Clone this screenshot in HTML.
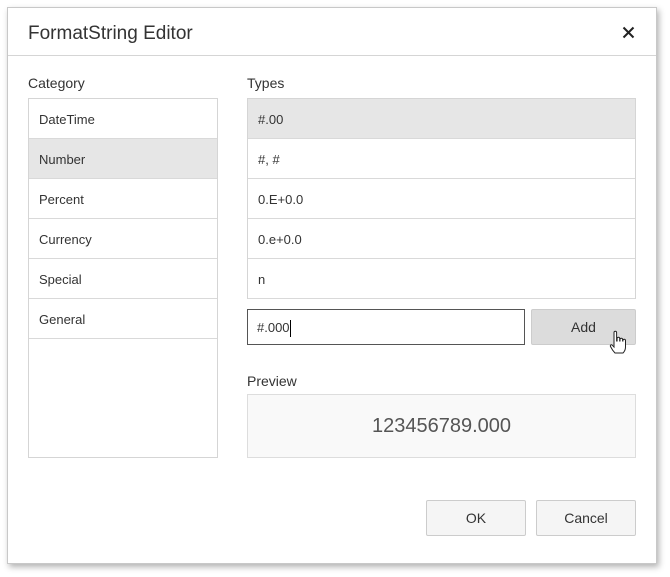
<!DOCTYPE html>
<html><head><style>
body{margin:0;width:670px;height:577px;background:#fff;font-family:"Liberation Sans",sans-serif;position:relative;overflow:hidden}
.dlg{position:absolute;left:7px;top:7px;width:648px;height:555px;border:1px solid #c8c8c8;background:#fff;box-shadow:2px 3px 6px rgba(0,0,0,.3)}
.a{position:absolute}
.title{left:20px;top:15px;font-size:19px;color:#333}
.hdr{left:0;top:47px;width:648px;height:1px;background:#d5d5d5}
.lbl{font-size:14px;color:#333}
.list{border:1px solid #d5d5d5;box-sizing:border-box;background:#fff}
.it{height:40px;border-bottom:1px solid #d9d9d9;box-sizing:border-box;font-size:13px;color:#333;padding-left:10px;line-height:41px}
.sel{background:#e6e6e6}
.btn{border:1px solid #ccc;border-radius:2px;background:#f5f5f5;box-sizing:border-box;text-align:center;font-size:14px;color:#333}
</style></head><body>
<div class="dlg">
<div class="a title">FormatString Editor</div>
<svg class="a" style="left:614px;top:18px" width="13" height="13"><path d="M1.5 1.5L11.5 11.5M11.5 1.5L1.5 11.5" stroke="#222" stroke-width="2"/></svg>
<div class="a hdr"></div>
<div class="a lbl" style="left:20px;top:67px">Category</div>
<div class="a lbl" style="left:239px;top:67px">Types</div>
<div class="a list" style="left:20px;top:90px;width:190px;height:360px">
<div class="it">DateTime</div><div class="it sel">Number</div><div class="it">Percent</div><div class="it">Currency</div><div class="it">Special</div><div class="it">General</div></div>
<div class="a list" style="left:239px;top:90px;width:389px;height:201px;border-bottom:none">
<div class="it sel">#.00</div><div class="it">#, #</div><div class="it">0.E+0.0</div><div class="it">0.e+0.0</div><div class="it">n</div></div>
<div class="a" style="left:239px;top:301px;width:278px;height:36px;border:1px solid #555;box-sizing:border-box;font-size:13px;color:#333;padding-left:9px;line-height:35px">#.000<span style="display:inline-block;width:1px;height:17px;background:#000;vertical-align:middle"></span></div>
<div class="a btn" style="left:523px;top:301px;width:105px;height:36px;line-height:35px;background:#dcdcdc">Add</div>
<svg class="a" style="left:601px;top:322px" width="18" height="26" viewBox="0 0 18 26"><path d="M5 2.5a1.3 1.3 0 0 1 2.6 0V11h.5V8.5a1.3 1.3 0 0 1 2.6 0V11h.3V9.5a1.3 1.3 0 0 1 2.6 0V11h.3v-.5a1.3 1.3 0 0 1 2.6 0V17c0 3-1.5 5-2.5 6H6c-1-1-3.5-4.5-4.5-6.5-.6-1.2.7-2.3 1.7-1.3L5 17z" fill="#fff" stroke="#222" stroke-width="1"/></svg>
<div class="a lbl" style="left:239px;top:365px">Preview</div>
<div class="a" style="left:239px;top:386px;width:389px;height:64px;border:1px solid #ddd;box-sizing:border-box;background:#f9f9f9;text-align:center;line-height:62px;font-size:20px;color:#555">123456789.000</div>
<div class="a btn" style="left:418px;top:492px;width:100px;height:36px;line-height:35px">OK</div>
<div class="a btn" style="left:528px;top:492px;width:100px;height:36px;line-height:35px">Cancel</div>
</div>
</body></html>
